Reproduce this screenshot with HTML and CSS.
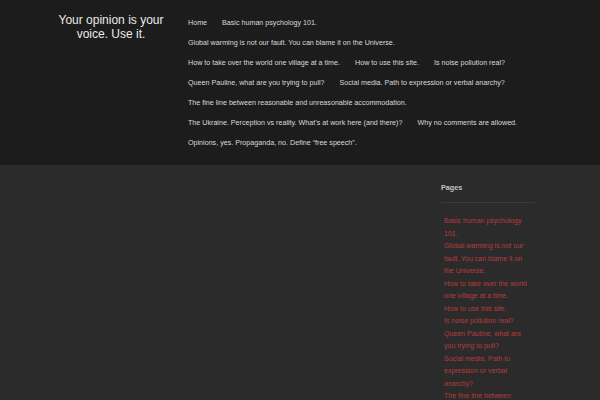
FILE: index.html
```html
<!DOCTYPE html>
<html lang="en">
<head>
<meta charset="utf-8">
<title>Your opinion is your voice. Use it.</title>
<link rel="stylesheet" href="styles.css">
</head>
<body>
<header class="site-header">
  <div class="branding">
    <h1 class="site-title">Your opinion is your voice. Use it.</h1>
  </div>
  <nav class="main-nav">
    <ul class="menu">
      <li><a href="#">Home</a></li>
      <li><a href="#">Basic human psychology 101.</a></li>
      <li><a href="#">Global warming is not our fault. You can blame it on the Universe.</a></li>
      <li><a href="#">How to take over the world one village at a time.</a></li>
      <li><a href="#">How to use this site.</a></li>
      <li><a href="#">Is noise pollution real?</a></li>
      <li><a href="#">Queen Pauline, what are you trying to pull?</a></li>
      <li><a href="#">Social media. Path to expression or verbal anarchy?</a></li>
      <li><a href="#">The fine line between reasonable and unreasonable accommodation.</a></li>
      <li><a href="#">The Ukraine. Perception vs reality. What’s at work here (and there)?</a></li>
      <li><a href="#">Why no comments are allowed.</a></li>
      <li><a href="#">Opinions, yes. Propaganda, no. Define “free speech”.</a></li>
    </ul>
  </nav>
</header>
<div class="site-main">
  <main class="content"></main>
  <aside class="sidebar">
    <section class="widget">
      <h2 class="widget-title">Pages</h2>
      <ul class="page-list">
        <li><a href="#">Basic human psychology 101.</a></li>
        <li><a href="#">Global warming is not our fault. You can blame it on the Universe.</a></li>
        <li><a href="#">How to take over the world one village at a time.</a></li>
        <li><a href="#">How to use this site.</a></li>
        <li><a href="#">Is noise pollution real?</a></li>
        <li><a href="#">Queen Pauline, what are you trying to pull?</a></li>
        <li><a href="#">Social media. Path to expression or verbal anarchy?</a></li>
        <li><a href="#">The fine line between reasonable and unreasonable accommodation.</a></li>
        <li><a href="#">The Ukraine. Perception vs reality. What’s at work here (and there)?</a></li>
        <li><a href="#">Why no comments are allowed.</a></li>
        <li><a href="#">Opinions, yes. Propaganda, no. Define “free speech”.</a></li>
      </ul>
    </section>
  </aside>
</div>
</body>
</html>
```
FILE: styles.css
```css
html, body {
  margin: 0;
  padding: 0;
}
body {
  background: #2b2b2b;
  font-family: "Liberation Sans", Arial, sans-serif;
  color: #dddddd;
  overflow: hidden;
  height: 400px;
}
a {
  text-decoration: none;
  color: inherit;
}
ul {
  list-style: none;
  margin: 0;
  padding: 0;
}
.site-header {
  background: #1c1c1c;
  height: 165px;
  box-sizing: border-box;
  display: flex;
  align-items: flex-start;
  padding: 13px 0 0 46px;
}
.branding {
  width: 130px;
  text-align: center;
}
.site-title {
  margin: 0;
  font-size: 12px;
  line-height: 14px;
  font-weight: normal;
  color: #eaeaea;
}
.main-nav {
  margin-left: 12px;
  width: 345px;
}
.menu {
  display: flex;
  flex-wrap: wrap;
  column-gap: 15px;
  font-size: 7.15px;
  line-height: 20px;
  color: #dadada;
}
.site-main {
  display: flex;
  padding: 18px 0 0 441px;
}
.content {
  flex: 0 0 0;
}
.sidebar {
  width: 94px;
}
.widget-title {
  margin: 0;
  font-size: 7.2px;
  line-height: 10px;
  font-weight: bold;
  color: #c4c4c4;
  padding-bottom: 9px;
  border-bottom: 1px solid #3a3a3a;
}
.page-list {
  padding: 12px 3px 0 3px;
  font-size: 7px;
  line-height: 12.5px;
  color: #b63b3d;
}
```
